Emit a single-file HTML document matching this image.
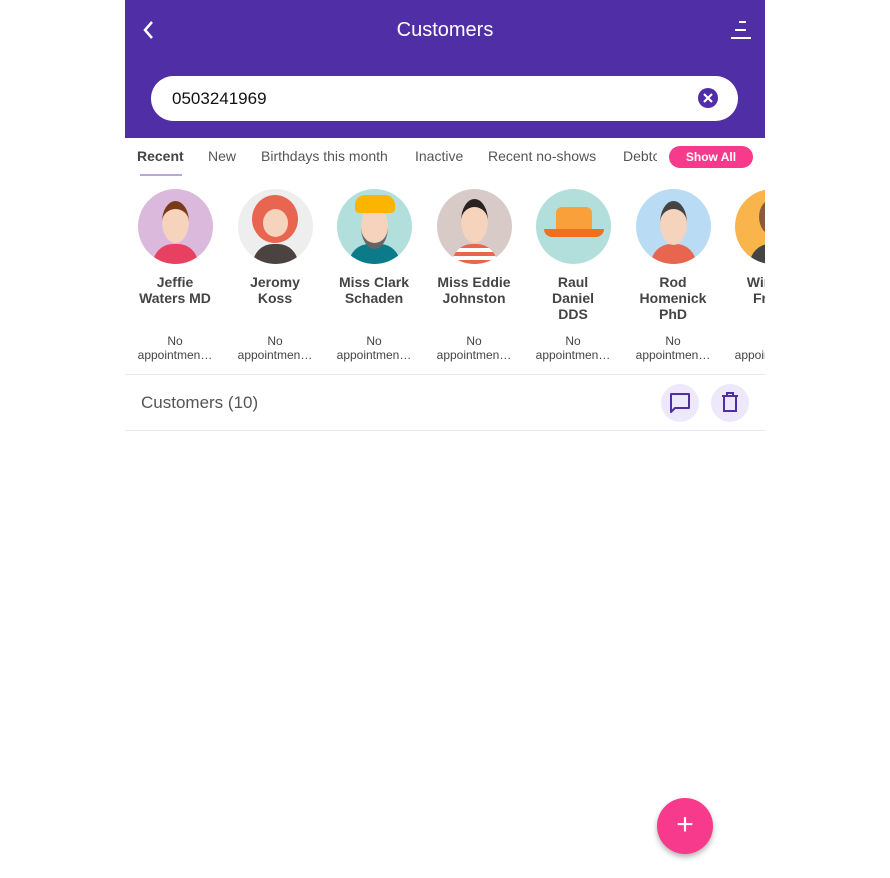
<!DOCTYPE html>
<html><head><style>
body{margin:0;background:#fff;font-family:"Liberation Sans",sans-serif;}
.app{position:absolute;left:125px;top:0;width:640px;height:878px;background:#fff;}
.hdr{position:absolute;left:0;top:0;width:640px;height:138px;background:#4f2ea6;}
.title{position:absolute;left:0;width:640px;top:19px;text-align:center;color:#fff;font-size:20px;}
.search{position:absolute;left:26px;top:76px;width:587px;height:45px;border-radius:23px;background:#fff;}
.search span{position:absolute;left:21px;top:13px;font-size:17px;color:#111;}
.clr{position:absolute;left:547px;top:12px;width:20px;height:20px;border-radius:50%;background:#4f2ea6;}
.tabs{position:absolute;top:148px;left:12px;font-size:14px;color:#555;white-space:nowrap;}
.tabs span{position:absolute;top:0}
.show{position:absolute;left:544px;top:146px;width:84px;height:22px;border-radius:11px;background:#f83a8c;color:#fff;font-weight:bold;font-size:12px;text-align:center;line-height:22px;}
.col{position:absolute;top:189px;width:100px;text-align:center;}
.av{width:75px;height:75px;border-radius:50%;margin:0 auto;overflow:hidden;position:relative;}
.nm{margin-top:10px;font-weight:bold;font-size:14px;line-height:16px;color:#444;height:60px;}
.ap{font-size:12px;line-height:14px;color:#444;}
.bar{position:absolute;top:374px;left:0;width:640px;height:55px;border-top:1px solid #ece8f6;border-bottom:1px solid #ece8f6;}
.ib{position:absolute;top:9px;width:38px;height:38px;border-radius:50%;background:#ede8fb;}
.fab{position:absolute;left:532px;top:798px;width:56px;height:56px;border-radius:50%;background:#f83a8c;box-shadow:0 3px 6px rgba(0,0,0,.3);color:#fff;font-size:30px;text-align:center;line-height:54px;}
</style></head><body>
<div class="app">
<div class="hdr">
<svg style="position:absolute;left:16px;top:20px" width="16" height="20"><path d="M11 2L4 10l7 8" stroke="#fff" stroke-width="2.5" fill="none"/></svg>
<div class="title">Customers</div>
<svg style="position:absolute;left:602px;top:20px" width="24" height="20"><path d="M12 2h7M8 10h11M4 18h20" stroke="#fff" stroke-width="2"/></svg>
<div class="search"><span>0503241969</span><div class="clr"><svg width="20" height="20"><path d="M6 6l8 8M14 6l-8 8" stroke="#fff" stroke-width="2.2"/></svg></div></div>
</div>
<div class="tabs">
<span style="left:0;font-weight:bold;color:#444">Recent</span>
<span style="left:71px">New</span>
<span style="left:124px">Birthdays this month</span>
<span style="left:278px">Inactive</span>
<span style="left:351px">Recent no-shows</span>
<span style="left:486px;width:34px;overflow:hidden">Debtors</span>
</div>
<div style="position:absolute;left:15px;top:174px;width:42px;height:2px;background:#b9a6e0"></div>
<div class="show">Show All</div>

<div class="col" style="left:0"><div class="av" style="background:#dbb9dc"><div style="position:absolute;left:15px;top:55px;width:45px;height:30px;border-radius:20px 20px 0 0;background:#e84060"></div><div style="position:absolute;left:24px;top:12px;width:27px;height:34px;border-radius:50%;background:#f5d3bd;border-top:8px solid #7a3a16"></div></div><div class="nm">Jeffie<br>Waters MD</div><div class="ap">No<br>appointmen…</div></div>
<div class="col" style="left:100px"><div class="av" style="background:#eee"><div style="position:absolute;left:15px;top:55px;width:45px;height:30px;border-radius:20px 20px 0 0;background:#4a4340"></div><div style="position:absolute;left:14px;top:6px;width:46px;height:48px;border-radius:50%;background:#e86650"></div><div style="position:absolute;left:25px;top:20px;width:25px;height:28px;border-radius:50%;background:#f5d3bd"></div></div><div class="nm">Jeromy<br>Koss</div><div class="ap">No<br>appointmen…</div></div>
<div class="col" style="left:199px"><div class="av" style="background:#b2dfdc"><div style="position:absolute;left:12px;top:55px;width:51px;height:30px;border-radius:20px 20px 0 0;background:#0b7b8a"></div><div style="position:absolute;left:24px;top:16px;width:27px;height:38px;border-radius:50%;background:#f5d3bd;border-bottom:6px solid #666"></div><div style="position:absolute;left:18px;top:6px;width:40px;height:18px;border-radius:10px 10px 4px 4px;background:#fbb400"></div></div><div class="nm">Miss Clark<br>Schaden</div><div class="ap">No<br>appointmen…</div></div>
<div class="col" style="left:299px"><div class="av" style="background:#d8cac6"><div style="position:absolute;left:15px;top:55px;width:45px;height:30px;border-radius:20px 20px 0 0;background:repeating-linear-gradient(#e86650 0 4px,#fff 4px 8px)"></div><div style="position:absolute;left:24px;top:10px;width:27px;height:36px;border-radius:50%;background:#f5d3bd;border-top:8px solid #2a2220"></div></div><div class="nm">Miss Eddie<br>Johnston</div><div class="ap">No<br>appointmen…</div></div>
<div class="col" style="left:398px"><div class="av" style="background:#b2dfdc"><div style="position:absolute;left:20px;top:18px;width:36px;height:24px;background:#f9a03a;border-radius:6px 6px 0 0"></div><div style="position:absolute;left:8px;top:40px;width:60px;height:8px;background:#f07020;border-radius:0 0 8px 8px"></div></div><div class="nm">Raul<br>Daniel<br>DDS</div><div class="ap">No<br>appointmen…</div></div>
<div class="col" style="left:498px"><div class="av" style="background:#b9dcf4"><div style="position:absolute;left:15px;top:55px;width:45px;height:30px;border-radius:20px 20px 0 0;background:#e86650"></div><div style="position:absolute;left:24px;top:12px;width:27px;height:36px;border-radius:50%;background:#f5d3bd;border-top:8px solid #444"></div></div><div class="nm">Rod<br>Homenick<br>PhD</div><div class="ap">No<br>appointmen…</div></div>
<div class="col" style="left:597px;width:43px;overflow:hidden;text-align:left"><div style="width:100px;text-align:center"><div class="av" style="background:#f9b44c"><div style="position:absolute;left:15px;top:55px;width:45px;height:30px;border-radius:20px 20px 0 0;background:#444"></div><div style="position:absolute;left:24px;top:10px;width:27px;height:36px;border-radius:50%;background:#8a5a3c"></div></div><div class="nm">Winona<br>Frami</div><div class="ap">No<br>appointmen…</div></div></div>

<div class="bar">
<div style="position:absolute;left:16px;top:18px;font-size:17px;color:#555">Customers (10)</div>
<div class="ib" style="left:536px"><svg width="38" height="38"><path d="M10 10h18v14H14l-4 4z" stroke="#4f2ea6" stroke-width="2" fill="none" stroke-linejoin="round"/></svg></div>
<div class="ib" style="left:586px"><svg width="38" height="38"><path d="M11 12h16M13 12v15h12V12M16 12V9h6v3" stroke="#4f2ea6" stroke-width="2" fill="none"/></svg></div>
</div>
<div class="fab">+</div>
</div>
</body></html>
